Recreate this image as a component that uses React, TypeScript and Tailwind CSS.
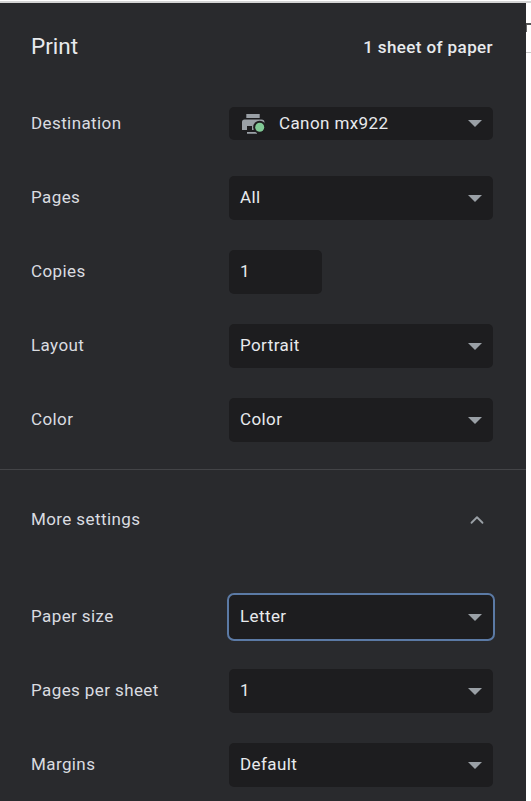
import { ChevronUp } from 'lucide-react';

const Arrow = () => (
  <span className="ml-auto w-0 h-0 border-x-[7px] border-x-transparent border-t-[7px] border-t-[#9aa0a6]" />
);

const PrinterIcon = () => (
  <svg width="24" height="24" viewBox="0 0 24 24" className="mr-[14px] shrink-0">
    <path fill="#9aa0a6" d="M5.3 2h13.4v4H5.3z" />
    <path fill="#9aa0a6" d="M3.5 7.5h17a3 3 0 0 1 3 3V18H1v-8a2.5 2.5 0 0 1 2.5-2.5z" />
    <path fill="#9aa0a6" d="M6 18h2v2h8v1.8H6z" />
    <path fill="#1d1d1f" d="M6 14h5v4H8v2H6z" />
    <circle cx="18.7" cy="15.2" r="6.5" fill="#1d1d1f" />
    <circle cx="18.7" cy="15.2" r="4.5" fill="#81c995" />
  </svg>
);

const Select = ({ value, icon, focused, h = 'h-11' }: { value: string; icon?: boolean; focused?: boolean; h?: string }) => (
  <div
    className={`flex items-center bg-[#1d1d1f] text-[#e8eaed] rounded-[5px] w-[264px] ${h} ${icon ? 'pl-[12px]' : 'pl-[11px]'} pr-[11px] ${focused ? 'outline-[2.5px] outline-[#5b7aa5]' : ''}`}
  >
    {icon && <PrinterIcon />}
    <span>{value}</span>
    <Arrow />
  </div>
);

const Row = ({ label, children, className }: { label: string; children: React.ReactNode; className?: string }) => (
  <div className={`flex items-center justify-between ${className ?? ''}`}>
    <span className="text-[#dadce0]">{label}</span>
    {children}
  </div>
);

export default function App() {
  return (
    <div className="w-[531px] h-[801px] overflow-hidden bg-white font-['Roboto',sans-serif] text-[17px] tracking-[0.4px]">
      <div className="h-[3px] pt-px bg-white">
        <div className="h-[2px] bg-[#d4d4d4]" />
      </div>
      <div className="flex">
        <div className="w-[526px] h-[798px] bg-[#292a2d]">
          <div className="pl-[31px] pr-[33px]">
            <div className="flex items-center justify-between h-[88px]">
              <span className="text-[22.5px] text-[#e8eaed] tracking-normal">Print</span>
              <span className="font-medium text-[#e8eaed] text-[17px] tracking-[0.4px] pt-[2px]">1 sheet of paper</span>
            </div>
            <Row label="Destination" className="mt-[16px] h-[33px]">
              <Select value="Canon mx922" icon h="h-[33px]" />
            </Row>
            <Row label="Pages" className="mt-[36px]">
              <Select value="All" />
            </Row>
            <Row label="Copies" className="mt-[30px]">
              <div className="flex items-center bg-[#1d1d1f] text-[#e8eaed] rounded-[5px] w-[93px] h-11 pl-[11px] mr-[171px]">1</div>
            </Row>
            <Row label="Layout" className="mt-[30px]">
              <Select value="Portrait" />
            </Row>
            <Row label="Color" className="mt-[30px]">
              <Select value="Color" />
            </Row>
          </div>
          <div className="h-px bg-[#434447] mt-[27px]" />
          <div className="pl-[31px] pr-[33px]">
            <div className="flex items-center justify-between h-[99px]">
              <span className="text-[#dadce0]">More settings</span>
              <ChevronUp size={22} strokeWidth={2} className="text-[#9aa0a6] mr-[5px]" />
            </div>
            <Row label="Paper size" className="mt-[26px]">
              <Select value="Letter" focused />
            </Row>
            <Row label="Pages per sheet" className="mt-[30px]">
              <Select value="1" />
            </Row>
            <Row label="Margins" className="mt-[30px]">
              <Select value="Default" />
            </Row>
          </div>
        </div>
        {/* page preview peeking out behind the panel */}
        <div className="flex-1 flex flex-col">
          <div className="h-[2px] mt-[20px] bg-[#555]" />
          <div className="w-px h-[7px] bg-[#666]" />
          <div className="h-px mt-[20px] bg-[#c8c8c8]" />
        </div>
      </div>
    </div>
  );
}
